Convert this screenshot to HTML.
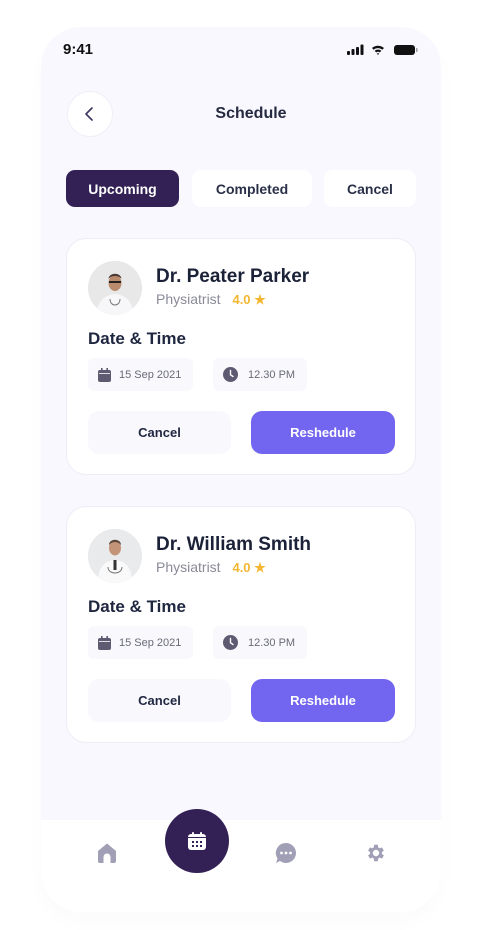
<!DOCTYPE html>
<html><head><meta charset="utf-8"><style>
*{margin:0;padding:0;box-sizing:border-box}
body{width:483px;height:930px;background:#fff;font-family:"Liberation Sans",sans-serif;position:relative;overflow:hidden;color:#1f2640}
.frame{position:absolute;left:41px;top:27px;width:400px;height:885px;background:#f9f8fe;border-radius:40px;overflow:hidden;box-shadow:0 10px 20px rgba(0,0,0,0.02)}
.abs{position:absolute}
.tab{position:absolute;top:143px;height:37px;border-radius:9px;background:#fff;font-size:14px;font-weight:bold;display:flex;align-items:center;justify-content:center;color:#2a3048}
.card{position:absolute;left:66px;width:350px;height:237px;background:#fff;border-radius:20px;border:1px solid #eeedf6}
.av{position:absolute;left:21px;top:22px;width:54px;height:54px;border-radius:50%;background:#e9eaec;overflow:hidden}
.name{position:absolute;left:89px;top:27px;font-size:19px;font-weight:bold;color:#1b2238}
.sub{position:absolute;left:89px;top:52px;font-size:14px;color:#8a8a98}
.sub b{color:#f4b731;font-weight:bold;margin-left:8px;font-size:13px}
.dt{position:absolute;left:21px;top:90px;font-size:17px;font-weight:bold;color:#1f2640}
.chip{position:absolute;top:119px;height:33px;background:#f8f8fd;border-radius:6px;font-size:11px;color:#6a6a78;display:flex;align-items:center}
.btn{position:absolute;top:172px;height:43px;border-radius:11px;font-size:13px;font-weight:bold;display:flex;align-items:center;justify-content:center}
</style></head><body>
<div class="frame">
  <div class="abs" style="left:22px;top:14px;font-size:15px;font-weight:bold;color:#111">9:41</div>
  <svg class="abs" style="left:306px;top:17px" width="72" height="12" viewBox="0 0 72 12">
    <rect x="0" y="7" width="3" height="4" rx="1" fill="#111"/><rect x="4.5" y="5" width="3" height="6" rx="1" fill="#111"/><rect x="9" y="3" width="3" height="8" rx="1" fill="#111"/><rect x="13.5" y="0.5" width="3" height="10.5" rx="1" fill="#111"/>
    <path d="M25 4 A9 9 0 0 1 37 4 L35.3 5.8 A6.5 6.5 0 0 0 26.7 5.8Z M27.6 6.8 A5 5 0 0 1 34.4 6.8 L32.7 8.5 A2.6 2.6 0 0 0 29.3 8.5Z M31 11 L29.9 9.6 A1.6 1.6 0 0 1 32.1 9.6Z" fill="#111"/>
    <rect x="47" y="1" width="21" height="10" rx="3" fill="#111"/><rect x="69" y="4" width="1.5" height="4" rx="0.7" fill="#999"/>
  </svg>
  <div class="abs" style="left:26px;top:64px;width:46px;height:46px;border-radius:50%;background:#fff;border:1px solid #f0eff7"></div>
  <svg class="abs" style="left:42px;top:79px" width="14" height="16" viewBox="0 0 14 16"><path d="M9 2 L3 8 L9 14" fill="none" stroke="#3a3560" stroke-width="1.6" stroke-linecap="round" stroke-linejoin="round"/></svg>
  <div class="abs" style="left:0;width:420px;top:78px;text-align:center;font-size:16px;font-weight:bold;color:#252a40">Schedule</div>
  <div class="tab" style="left:25px;width:113px;background:#332155;color:#fff">Upcoming</div>
  <div class="tab" style="left:151px;width:120px">Completed</div>
  <div class="tab" style="left:283px;width:92px">Cancel</div>
</div>

<div class="card" style="top:238px">
  <div class="av"><svg width="54" height="54" viewBox="0 0 54 54"><rect width="54" height="54" fill="#e8e8e9"/><path d="M8 54 C10 38 18 34 27 33 C36 34 44 38 46 54Z" fill="#f7f7f9"/><ellipse cx="27" cy="22" rx="6.5" ry="8" fill="#b98a6c"/><path d="M20.5 18 C21 11 33 11 33.5 18 C31 14 23 14 20.5 18Z" fill="#4a3a32"/><rect x="21" y="20" width="12" height="2" fill="#222"/><path d="M22 38 C22 46 32 46 32 38" fill="none" stroke="#777" stroke-width="1"/></svg></div>
  <div class="name">Dr. Peater Parker</div>
  <div class="sub">Physiatrist <b>4.0 ★</b></div>
  <div class="dt">Date &amp; Time</div>
  <div class="chip" style="left:21px;width:105px"><svg style="margin:0 8px 0 10px" width="13" height="14" viewBox="0 0 13 14"><rect x="0" y="2" width="13" height="12" rx="2" fill="#5d5a72"/><rect x="3" y="0" width="1.6" height="3" fill="#5d5a72"/><rect x="8.4" y="0" width="1.6" height="3" fill="#5d5a72"/><rect x="1" y="5" width="11" height="0.8" fill="#fff"/></svg>15 Sep 2021</div>
  <div class="chip" style="left:146px;width:94px"><svg style="margin:0 10px 0 10px" width="15" height="15" viewBox="0 0 15 15"><circle cx="7.5" cy="7.5" r="7.5" fill="#5d5a72"/><path d="M7.5 3.5 V7.8 L10 9.5" stroke="#fff" stroke-width="1.4" fill="none" stroke-linecap="round"/></svg>12.30 PM</div>
  <div class="btn" style="left:21px;width:143px;background:#f8f8fd;color:#1f2640">Cancel</div>
  <div class="btn" style="left:184px;width:144px;background:#7265ef;color:#fff">Reshedule</div>
</div>

<div class="card" style="top:506px">
  <div class="av"><svg width="54" height="54" viewBox="0 0 54 54"><rect width="54" height="54" fill="#e9eaec"/><path d="M10 54 C10 36 18 32 27 31 C36 32 44 36 44 54Z" fill="#f9f9fa"/><ellipse cx="27" cy="19" rx="6" ry="7.5" fill="#c49478"/><path d="M21 16 C21 9 33 9 33 16 C30 12 24 12 21 16Z" fill="#5a463a"/><path d="M20 38 C20 46 34 46 34 38" fill="none" stroke="#777" stroke-width="1"/><rect x="25.5" y="31" width="3" height="10" fill="#333"/></svg></div>
  <div class="name">Dr. William Smith</div>
  <div class="sub">Physiatrist <b>4.0 ★</b></div>
  <div class="dt">Date &amp; Time</div>
  <div class="chip" style="left:21px;width:105px"><svg style="margin:0 8px 0 10px" width="13" height="14" viewBox="0 0 13 14"><rect x="0" y="2" width="13" height="12" rx="2" fill="#5d5a72"/><rect x="3" y="0" width="1.6" height="3" fill="#5d5a72"/><rect x="8.4" y="0" width="1.6" height="3" fill="#5d5a72"/><rect x="1" y="5" width="11" height="0.8" fill="#fff"/></svg>15 Sep 2021</div>
  <div class="chip" style="left:146px;width:94px"><svg style="margin:0 10px 0 10px" width="15" height="15" viewBox="0 0 15 15"><circle cx="7.5" cy="7.5" r="7.5" fill="#5d5a72"/><path d="M7.5 3.5 V7.8 L10 9.5" stroke="#fff" stroke-width="1.4" fill="none" stroke-linecap="round"/></svg>12.30 PM</div>
  <div class="btn" style="left:21px;width:143px;background:#f8f8fd;color:#1f2640">Cancel</div>
  <div class="btn" style="left:184px;width:144px;background:#7265ef;color:#fff">Reshedule</div>
</div>

<div class="abs" style="left:41px;top:820px;width:400px;height:92px;background:#fff;border-radius:0 0 40px 40px"></div>
<div class="abs" style="left:165px;top:809px;width:64px;height:64px;border-radius:50%;background:#332155"></div>
<svg class="abs" style="left:187px;top:831px" width="20" height="20" viewBox="0 0 20 20"><rect x="1" y="3" width="18" height="16" rx="3" fill="#fff"/><rect x="5" y="1" width="2" height="4" rx="1" fill="#fff"/><rect x="13" y="1" width="2" height="4" rx="1" fill="#fff"/><rect x="1" y="6" width="18" height="1" fill="#332155"/><g fill="#332155"><rect x="5" y="10" width="2" height="2"/><rect x="9" y="10" width="2" height="2"/><rect x="13" y="10" width="2" height="2"/><rect x="5" y="14" width="2" height="2"/><rect x="9" y="14" width="2" height="2"/><rect x="13" y="14" width="2" height="2"/></g></svg>
<svg class="abs" style="left:96px;top:842px" width="22" height="22" viewBox="0 0 22 22"><path d="M2 9 L11 1.5 L20 9 V19 A2 2 0 0 1 18 21 H14.5 V15 A3.5 3.5 0 0 0 7.5 15 V21 H4 A2 2 0 0 1 2 19Z" fill="#a19fb6"/></svg>
<svg class="abs" style="left:275px;top:842px" width="22" height="22" viewBox="0 0 22 22"><path d="M11 1 A10 10 0 1 1 5 19 L1 21 L2.5 16.5 A10 10 0 0 1 11 1Z" fill="#a19fb6"/><circle cx="6.5" cy="11" r="1.4" fill="#fff"/><circle cx="11" cy="11" r="1.4" fill="#fff"/><circle cx="15.5" cy="11" r="1.4" fill="#fff"/></svg>
<svg class="abs" style="left:365px;top:842px" width="22" height="22" viewBox="0 0 24 24"><path fill="#a19fb6" d="M19.4 13a7.5 7.5 0 0 0 0-2l2.1-1.6-2-3.5-2.5 1a7.6 7.6 0 0 0-1.7-1L15 3h-4l-.4 2.9a7.6 7.6 0 0 0-1.7 1l-2.5-1-2 3.5L6.5 11a7.5 7.5 0 0 0 0 2l-2.1 1.6 2 3.5 2.5-1a7.6 7.6 0 0 0 1.7 1L11 21h4l.4-2.9a7.6 7.6 0 0 0 1.7-1l2.5 1 2-3.5zM13 15.5a3.5 3.5 0 1 1 0-7 3.5 3.5 0 0 1 0 7z" transform="translate(-1 0)"/></svg>
</body></html>
